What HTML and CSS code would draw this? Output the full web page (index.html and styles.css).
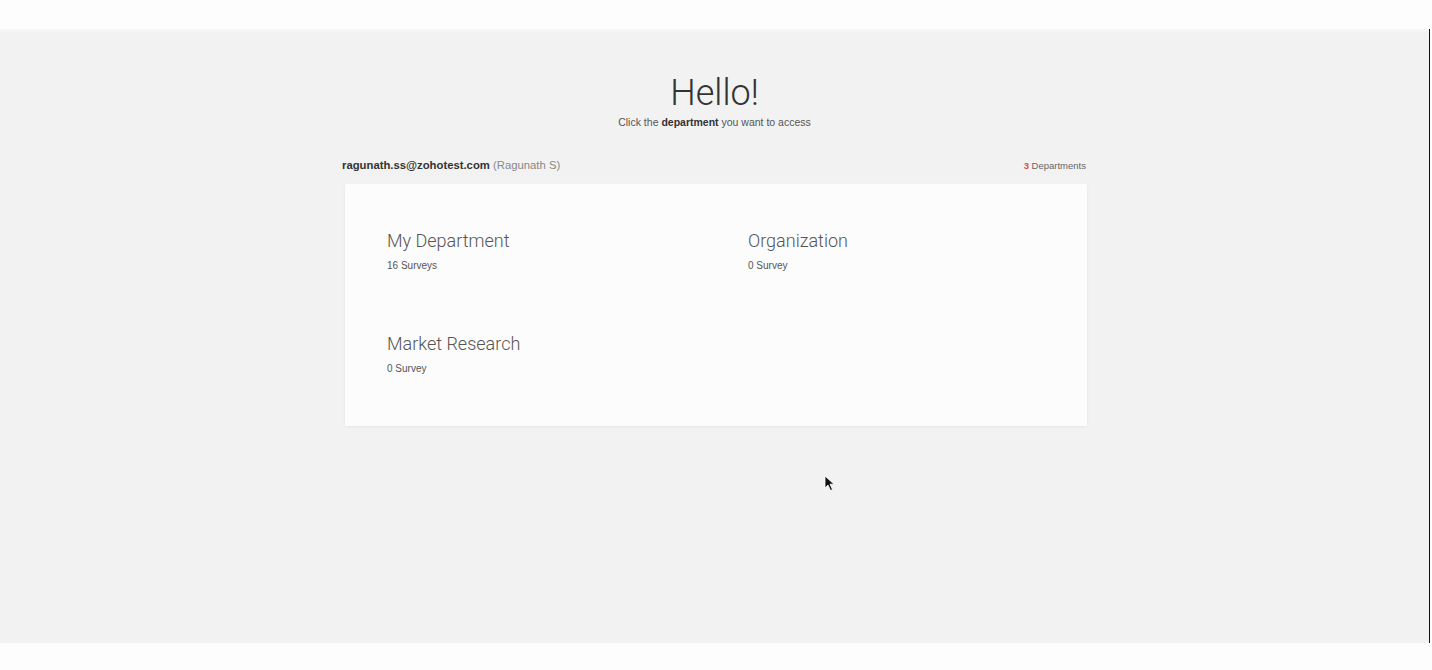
FILE: index.html
```html
<!DOCTYPE html>
<html lang="en">
<head>
    <meta charset="UTF-8">
    <title>Departments</title>
    <link rel="stylesheet" href="styles.css">
</head>
<body>
    <div class="stage">
        <div class="welcome">
            <h1>Hello!</h1>
            <p>Click the <b>department</b> you want to access</p>
        </div>

        <div class="container">
            <div class="account">
                <span class="user"><b>ragunath.ss@zohotest.com</b> (Ragunath S)</span>
                <span class="count"><em>3</em> Departments</span>
            </div>

            <!-- Department list -->
            <div class="card">
                <div class="dept">
                    <h2>My Department</h2>
                    <span>16 Surveys</span>
                </div>
                <div class="dept">
                    <h2>Organization</h2>
                    <span>0 Survey</span>
                </div>
                <div class="dept">
                    <h2>Market Research</h2>
                    <span>0 Survey</span>
                </div>
            </div>
        </div>

        <svg class="cursor" width="12" height="18" viewBox="0 0 12 18">
            <path d="M1 1 L1 13 L4 10 L6.5 15.5 L8.5 14.6 L6 9.2 L10 9.2 Z" fill="#111" stroke="#fff" stroke-width="0.8"/>
        </svg>
    </div>
</body>
</html>
```

FILE: styles.css
```css
body {
    margin: 0;
    background-color: #fdfdfd;
    font-family: "Liberation Sans", Arial, sans-serif;
    color: #333;
}
.stage {
    position: relative;
    margin-top: 29px;
    width: 1430px;
    height: 614px;
    background-color: #f2f2f2;
    border-right: 1px solid #111;
    box-shadow: inset 0 4px 4px -2px #f8f8f8;
    padding-top: 1px;
    box-sizing: border-box;
}
.welcome {
    text-align: center;
    margin-top: 43px;
}
h1 {
    font-family: Roboto, "Liberation Sans", sans-serif;
    font-weight: 300;
    font-size: 36px;
    line-height: 40px;
    color: #333;
    margin: 0;
}
.welcome p {
    font-size: 10.5px;
    color: #555;
    margin: 3px 0 0;
}
.welcome b {
    color: #333;
}
.container {
    width: 745px;
    margin: 31px auto 0;
}
.account {
    display: flex;
    justify-content: space-between;
    align-items: baseline;
    font-size: 11.3px;
    padding-right: 1px;
}
.user {
    color: #888;
}
.user b {
    color: #333;
}
.count {
    font-size: 9.5px;
    color: #666;
}
.count em {
    font-style: normal;
    font-weight: bold;
    color: #e0474c;
}
.card {
    margin: 13px 0 0 3px;
    width: 742px;
    height: 242px;
    box-sizing: border-box;
    background-color: #fcfcfc;
    box-shadow: 0 1px 3px rgba(0, 0, 0, 0.06);
    padding: 45px 42px 0;
    display: grid;
    grid-template-columns: 361px 1fr;
    row-gap: 61px;
    align-content: start;
}
.dept h2 {
    font-family: Roboto, "Liberation Sans", sans-serif;
    font-weight: 300;
    font-size: 18px;
    line-height: 24px;
    color: #555;
    margin: 0;
}
.dept span {
    display: block;
    margin-top: 7px;
    font-size: 10px;
    color: #555;
}
.cursor {
    position: absolute;
    left: 824px;
    top: 446px;
}
```
